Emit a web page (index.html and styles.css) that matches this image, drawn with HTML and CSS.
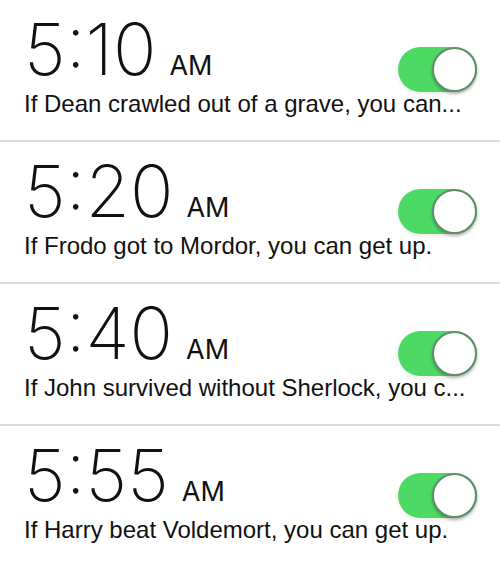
FILE: index.html
```html
<!DOCTYPE html>
<html>
<head>
<meta charset="utf-8">
<link rel="stylesheet" href="styles.css">
</head>
<body>
<div class="list">
  <div class="row">
    <div class="time"><span class="digits">5:10</span><span class="ampm">AM</span></div>
    <div class="toggle"><div class="knob"></div></div>
    <div class="label">If Dean crawled out of a grave, you can...</div>
  </div>
  <div class="row">
    <div class="time"><span class="digits">5:20</span><span class="ampm">AM</span></div>
    <div class="toggle"><div class="knob"></div></div>
    <div class="label">If Frodo got to Mordor, you can get up.</div>
  </div>
  <div class="row">
    <div class="time"><span class="digits">5:40</span><span class="ampm">AM</span></div>
    <div class="toggle"><div class="knob"></div></div>
    <div class="label">If John survived without Sherlock, you c...</div>
  </div>
  <div class="row">
    <div class="time"><span class="digits">5:55</span><span class="ampm">AM</span></div>
    <div class="toggle"><div class="knob"></div></div>
    <div class="label">If Harry beat Voldemort, you can get up.</div>
  </div>
</div>
</body>
</html>
```
FILE: styles.css
```css
html, body {
  margin: 0;
  padding: 0;
  background: #ffffff;
}
body {
  width: 500px;
  height: 564px;
  overflow: hidden;
  font-family: "Liberation Sans", Arial, sans-serif;
  color: #111;
}
.list {
  display: flex;
  flex-direction: column;
}
.row {
  height: 142px;
  box-sizing: border-box;
  border-bottom: 2px solid #d9d9d9;
  display: grid;
  grid-template-columns: 1fr auto;
  grid-template-rows: 78px auto;
  align-items: start;
  padding: 14px 23px 0 24px;
}
.row:last-child {
  border-bottom: none;
}
.time {
  display: flex;
  align-items: baseline;
  height: 70px;
  line-height: 70px;
}
.digits {
  font-family: Inter, Roboto, "Liberation Sans", sans-serif;
  font-weight: 200;
  font-size: 72px;
  letter-spacing: 0;
}
.ampm {
  font-family: Inter, "Liberation Sans", sans-serif;
  font-weight: 400;
  font-size: 27px;
  margin-left: 13px;
}
.toggle {
  margin-top: 33px;
  width: 79px;
  height: 45px;
  border-radius: 23px;
  background: #4cd964;
  display: flex;
  justify-content: flex-end;
  align-items: center;
  box-sizing: border-box;
  box-shadow: 0 2px 4px rgba(0,0,0,0.08);
}
.knob {
  width: 45px;
  height: 45px;
  border-radius: 50%;
  background: #fff;
  box-sizing: border-box;
  border: 2px solid #5f8f6a;
  box-shadow: 0 2px 3px rgba(0,0,0,0.25);
}
.label {
  grid-column: 1 / 3;
  font-size: 24px;
  margin-top: -2px;
  white-space: nowrap;
}
```
